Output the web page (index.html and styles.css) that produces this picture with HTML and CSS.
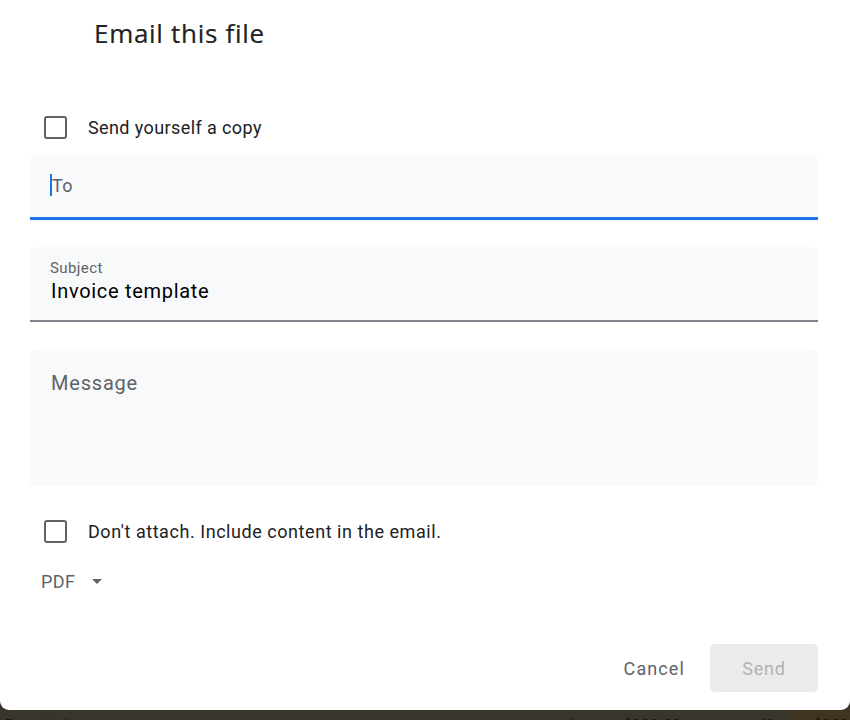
FILE: index.html
```html
<!DOCTYPE html>
<html lang="en">
<head>
<meta charset="utf-8">
<title>Email this file</title>
<link rel="stylesheet" href="styles.css">
</head>
<body>
<div class="dialog">
  <h1 class="title">Email this file</h1>
  <label class="check-row first">
    <span class="box"></span>
    <span class="check-label">Send yourself a copy</span>
  </label>
  <div class="field to-field">
    <span class="caret"></span><span class="placeholder">To</span>
  </div>
  <div class="field subject-field">
    <div class="field-label">Subject</div>
    <div class="field-value">Invoice template</div>
  </div>
  <div class="field message-field">
    <span class="placeholder big">Message</span>
  </div>
  <label class="check-row second">
    <span class="box"></span>
    <span class="check-label wide">Don't attach. Include content in the email.</span>
  </label>
  <div class="format">
    <span>PDF</span>
    <svg class="arrow" width="10" height="5" viewBox="0 0 10 5"><path d="M0 0h10L5 5z" fill="#5f6368"/></svg>
  </div>
  <div class="actions">
    <button class="btn cancel">Cancel</button>
    <button class="btn send">Send</button>
  </div>
</div>
<div class="backdrop">
  <span class="c c-desc">Description</span>
  <span class="c c-qty">1</span>
  <span class="c c-price">$000.00</span>
  <span class="c c-tax">4%</span>
  <span class="c c-total">$000</span>
</div>
</body>
</html>
```
FILE: styles.css
```css
html, body {
  margin: 0;
  padding: 0;
  height: 720px;
  overflow: hidden;
  background: #39352c;
  font-family: Roboto, "Liberation Sans", Arial, sans-serif;
}
.dialog {
  box-sizing: border-box;
  width: 850px;
  height: 710px;
  background: #fff;
  border-radius: 0 0 9px 9px;
  padding: 17px 32px 0 30px;
  display: flex;
  flex-direction: column;
}
.title {
  margin: 0 0 0 64px;
  font-size: 26px;
  line-height: 32px;
  font-weight: 400;
  color: #202124;
  font-family: "Open Sans", Roboto, sans-serif;
  letter-spacing: 0.7px;
  -webkit-text-stroke: 0.2px #202124;
}
.check-row {
  display: flex;
  align-items: center;
  height: 24px;
  padding-left: 14px;
}
.check-row.first { margin-top: 66px; }
.check-row.second { margin-top: 33px; }
.box {
  box-sizing: border-box;
  width: 23px;
  height: 23px;
  border: 2px solid #5f6368;
  border-radius: 3px;
  flex: none;
}
.check-label {
  margin-left: 21px;
  font-size: 18px;
  color: #202124;
  letter-spacing: 0.4px;
}
.check-label.wide { letter-spacing: 0.55px; }
.field {
  box-sizing: border-box;
  background: #f8f9fa;
  border-radius: 6px 6px 0 0;
  padding-left: 20px;
}
.to-field {
  margin-top: 16px;
  height: 65px;
  border-bottom: 3px solid #1a73e8;
  display: flex;
  align-items: center;
  padding-bottom: 2px;
}
.caret {
  width: 2px;
  height: 22px;
  background: #1a73e8;
}
.placeholder {
  font-size: 18px;
  color: #5f6368;
  letter-spacing: 0.3px;
}
.placeholder.big {
  font-size: 20px;
  letter-spacing: 0.8px;
}
.subject-field {
  margin-top: 27px;
  height: 75px;
  border-bottom: 2px solid #80868b;
  padding-top: 11px;
}
.field-label {
  font-size: 15px;
  line-height: 20px;
  color: #5f6368;
  letter-spacing: 0.4px;
}
.field-value {
  font-size: 20px;
  line-height: 26px;
  color: #000;
  padding-left: 1px;
  letter-spacing: 0.7px;
}
.message-field {
  margin-top: 27px;
  height: 137px;
  padding-top: 22px;
  padding-left: 21px;
  border-radius: 6px;
}
.format {
  margin-top: 28px;
  padding-left: 11px;
  height: 20px;
  display: flex;
  align-items: center;
  font-size: 18px;
  color: #5f6368;
  letter-spacing: 0.4px;
}
.arrow { margin-left: 17px; }
.actions {
  margin-top: 53px;
  display: flex;
  justify-content: flex-end;
  align-items: center;
}
.btn {
  font-family: Roboto, "Liberation Sans", Arial, sans-serif;
  font-size: 18px;
  border: none;
  background: none;
  height: 48px;
  padding: 0;
  cursor: pointer;
}
.cancel {
  color: #5f6368;
  margin-right: 25px;
  letter-spacing: 1.1px;
}
.send {
  width: 108px;
  background: #ebebeb;
  color: #b1b1b1;
  border-radius: 5px;
  letter-spacing: 0.8px;
}
.backdrop {
  display: flex;
  height: 10px;
  overflow: visible;
}
.c {
  font-size: 16px;
  line-height: 20px;
  color: #111;
  margin-top: 6px;
}
.c-desc { margin-left: 5px; width: 563px; }
.c-qty { width: 55px; }
.c-price { width: 135px; }
.c-tax { width: 31px; }
.c-total {
  background: #3e3420;
  padding-left: 24px;
  flex: 1;
  margin-top: 0;
  padding-top: 6px;
}
```
